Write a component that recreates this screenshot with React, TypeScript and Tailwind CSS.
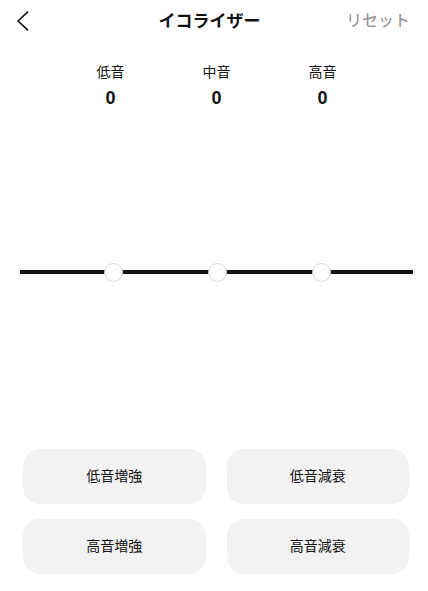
const bands = [
  { label: '低音', value: 0 },
  { label: '中音', value: 0 },
  { label: '高音', value: 0 },
]

const presets = ['低音増強', '低音減衰', '高音増強', '高音減衰']

export default function App() {
  return (
    <div
      className="w-[428px] h-[591px] bg-white text-[#111] flex flex-col"
      style={{ fontFamily: '"Liberation Sans", "Noto Sans CJK JP", sans-serif' }}
    >
      {/* top bar */}
      <div className="h-[42px] grid grid-cols-[1fr_auto_1fr] items-center pl-[16px] pr-[18px]">
        <button className="w-[24px] h-[24px] flex items-center justify-start">
          <svg width="13" height="20" viewBox="0 0 13 20" fill="none">
            <path d="M11.5 1.2 2 10l9.5 8.8" stroke="#111" strokeWidth="1.7" strokeLinecap="round" strokeLinejoin="round" />
          </svg>
        </button>
        <h1 className="text-[17px] font-bold leading-none ml-[-7px]">イコライザー</h1>
        <span className="justify-self-end text-[16px] text-[#8a8a8a] leading-none">リセット</span>
      </div>

      {/* band values */}
      <div className="flex justify-center pl-[5px] mt-[21px]">
        {bands.map((b) => (
          <div key={b.label} className="w-[106px] flex flex-col items-center">
            <span className="text-[14px] leading-[18px]">{b.label}</span>
            <span className="text-[18px] font-bold leading-[22px] mt-[6px]">{b.value}</span>
          </div>
        ))}
      </div>

      {/* slider */}
      <div className="relative mt-[153px] ml-[20px] w-[393px] h-[20px] flex items-center">
        <div className="w-full h-[4px] bg-[#111]" />
        <div className="absolute inset-0 flex items-center justify-center gap-[85px] pl-[1px]">
          {bands.map((b) => (
            <div
              key={b.label}
              className="w-[19px] h-[19px] rounded-full bg-white border border-[#d9d9d9]"
            />
          ))}
        </div>
      </div>

      {/* presets */}
      <div className="grid grid-cols-2 gap-x-[21px] gap-y-[15px] pl-[23px] pr-[19px] mt-[167px]">
        {presets.map((p) => (
          <button
            key={p}
            className="h-[55px] rounded-[17px] bg-[#f2f2f2] text-[14px] flex items-center justify-center"
          >
            {p}
          </button>
        ))}
      </div>
    </div>
  )
}
